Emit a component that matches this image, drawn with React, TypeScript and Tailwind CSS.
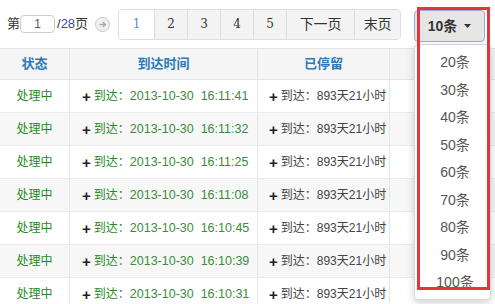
import React from "react";

const rows = [
  "16:11:41",
  "16:11:32",
  "16:11:25",
  "16:11:08",
  "16:10:45",
  "16:10:39",
  "16:10:31",
];

const sizes = ["20条", "30条", "40条", "50条", "60条", "70条", "80条", "90条", "100条"];

const font = { fontFamily: '"Liberation Sans", "Noto Sans CJK SC", sans-serif' };
const serif = { fontFamily: '"DejaVu Serif", "Noto Sans CJK SC", serif' };

export default function App() {
  return (
    <div
      className="relative w-[495px] h-[304px] overflow-hidden bg-white text-[#333]"
      style={font}
    >
      {/* pagination bar */}
      <div className="flex h-[48px] items-center pl-[7px] text-[13px]">
        <span>第</span>
        <div className="flex h-[18px] w-[35px] items-center justify-center rounded-[4px] border border-[#ccc] text-[12px] text-[#555]">
          1
        </div>
        <span className="ml-[2px]">
          /<span className="text-[#3a46b4]">28</span>页
        </span>
        <div className="ml-[7px] flex h-[15px] w-[15px] items-center justify-center rounded-full border border-[#c8c8c8] bg-[#f0f0f0]">
          <svg width="9" height="9" viewBox="0 0 10 10">
            <path d="M1.5 5H8M5.5 2.2L8.2 5L5.5 7.8" fill="none" stroke="#aaa" strokeWidth="1.6" />
          </svg>
        </div>
        <div className="ml-[8px] flex h-[31px] overflow-hidden rounded-[4px] border border-[#ddd] text-[12px]">
          <div className="flex w-[35px] items-center justify-center bg-white text-[#5a8ad6]" style={serif}>
            1
          </div>
          {["2", "3", "4", "5"].map((n) => (
            <div
              key={n}
              className="flex w-[33px] items-center justify-center border-l border-[#ddd] bg-[#f3f3f3] text-[#333]"
              style={serif}
            >
              {n}
            </div>
          ))}
          <div className="flex w-[68px] items-center justify-center border-l border-[#ddd] bg-[#f3f3f3] text-[14px] text-[#333]">
            下一页
          </div>
          <div className="flex w-[46px] items-center justify-center border-l border-[#ddd] bg-[#f3f3f3] text-[14px] text-[#333]">
            末页
          </div>
        </div>
      </div>

      {/* table */}
      <div className="text-[12px]">
        <div className="grid h-[32px] grid-cols-[70px_188px_132px_1fr] border-t border-b border-[#e3e3e3] bg-[#f5f5f5] text-[13px] font-bold text-[#2a7ab9]">
          <div className="flex items-center justify-center border-r border-[#e3e3e3]">状态</div>
          <div className="flex items-center justify-center border-r border-[#e3e3e3]">到达时间</div>
          <div className="flex items-center justify-center border-r border-[#e3e3e3]">已停留</div>
          <div />
        </div>
        {rows.map((t, i) => (
          <div
            key={t}
            className={
              "grid h-[33px] grid-cols-[70px_188px_132px_1fr] border-b border-[#ebebeb] " +
              (i % 2 === 1 ? "bg-[#f7f7f7]" : "bg-white")
            }
          >
            <div className="flex items-center justify-center border-r border-[#e6e6e6] text-[#1d8a1d]">处理中</div>
            <div className="flex items-center overflow-hidden whitespace-pre border-r border-[#e6e6e6] pl-[12px] text-[#3c8c3c]">
              <span className="mr-[3px] text-[15px] font-bold leading-none text-[#222]">+</span>
              <span className="text-[#1d8a1d]">到达：</span>
              <span className="text-[12.5px]">{"2013-10-30  " + t}</span>
            </div>
            <div className="flex items-center overflow-hidden whitespace-nowrap border-r border-[#e6e6e6] pl-[11px] text-[#444]">
              <span className="mr-[3px] text-[15px] font-bold leading-none text-[#222]">+</span>
              <span>到达：893天21小时</span>
            </div>
            <div />
          </div>
        ))}
      </div>

      {/* page-size button */}
      <div className="absolute left-[414px] top-[10px] flex h-[32px] w-[71px] items-center justify-center gap-[7px] rounded-[4px] border border-[#8fb0e0] bg-[#e6e6e6] text-[14px] font-bold text-[#333]">
        <span>10条</span>
        <svg width="7" height="4" viewBox="0 0 7 4">
          <path d="M0 0H7L3.5 4Z" fill="#333" />
        </svg>
      </div>

      {/* dropdown menu */}
      <div className="absolute left-[414px] top-[44px] flex h-[256px] w-[77px] flex-col overflow-hidden rounded-[4px] border border-[#d8d8d8] bg-white pl-[5px] pt-[4px] shadow-[0_3px_8px_rgba(0,0,0,0.18)]">
        {sizes.map((s) => (
          <div key={s} className="flex h-[27.5px] shrink-0 items-center justify-center text-[14px] text-[#555]">
            {s}
          </div>
        ))}
      </div>

      {/* red annotation frame */}
      <div className="pointer-events-none absolute left-[417px] top-[7px] h-[283px] w-[73px] border-[3px] border-[#e2363c]" />
    </div>
  );
}
